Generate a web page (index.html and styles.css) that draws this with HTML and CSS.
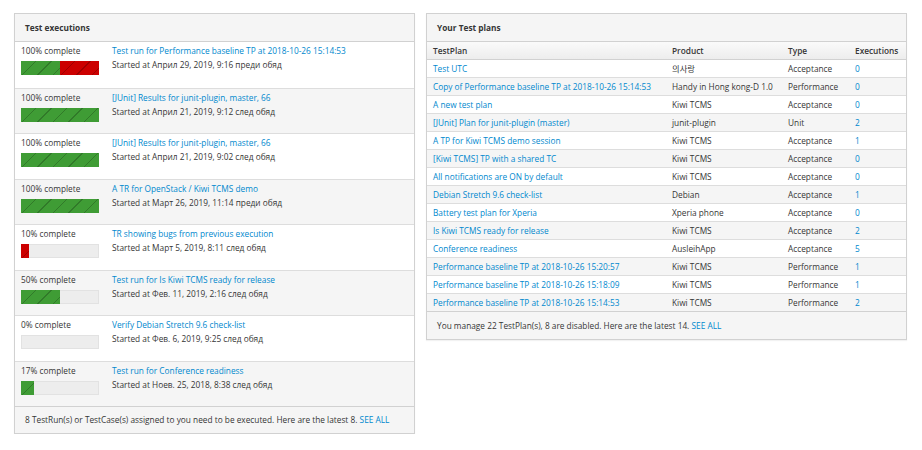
FILE: index.html
```html
<!DOCTYPE html>
<html>
<head>
<meta charset="utf-8">
<link rel="stylesheet" href="styles.css">
</head>
<body>
<div class="page">
  <div class="panel">
    <div class="panel-heading">Test executions</div>
    <div class="list">
      <div class="item">
        <div class="prog-col">
          <div class="pct">100% complete</div>
          <div class="bar"><div class="fill green" style="width:50%"></div><div class="fill red" style="width:50%"></div></div>
        </div>
        <div class="info-col">
          <a class="link">Test run for Performance baseline TP at 2018-10-26 15:14:53</a>
          <div class="started">Started at Април 29, 2019, 9:16 преди обяд</div>
        </div>
      </div>
      <div class="item">
        <div class="prog-col">
          <div class="pct">100% complete</div>
          <div class="bar"><div class="fill green" style="width:100%"></div></div>
        </div>
        <div class="info-col">
          <a class="link">[JUnit] Results for junit-plugin, master, 66</a>
          <div class="started">Started at Април 21, 2019, 9:12 след обяд</div>
        </div>
      </div>
      <div class="item">
        <div class="prog-col">
          <div class="pct">100% complete</div>
          <div class="bar"><div class="fill green" style="width:100%"></div></div>
        </div>
        <div class="info-col">
          <a class="link">[JUnit] Results for junit-plugin, master, 66</a>
          <div class="started">Started at Април 21, 2019, 9:02 след обяд</div>
        </div>
      </div>
      <div class="item">
        <div class="prog-col">
          <div class="pct">100% complete</div>
          <div class="bar"><div class="fill green" style="width:100%"></div></div>
        </div>
        <div class="info-col">
          <a class="link">A TR for OpenStack / Kiwi TCMS demo</a>
          <div class="started">Started at Март 26, 2019, 11:14 преди обяд</div>
        </div>
      </div>
      <div class="item">
        <div class="prog-col">
          <div class="pct">10% complete</div>
          <div class="bar"><div class="fill red" style="width:10%"></div></div>
        </div>
        <div class="info-col">
          <a class="link">TR showing bugs from previous execution</a>
          <div class="started">Started at Март 5, 2019, 8:11 след обяд</div>
        </div>
      </div>
      <div class="item">
        <div class="prog-col">
          <div class="pct">50% complete</div>
          <div class="bar"><div class="fill green" style="width:50%"></div></div>
        </div>
        <div class="info-col">
          <a class="link">Test run for Is Kiwi TCMS ready for release</a>
          <div class="started">Started at Фев. 11, 2019, 2:16 след обяд</div>
        </div>
      </div>
      <div class="item">
        <div class="prog-col">
          <div class="pct">0% complete</div>
          <div class="bar"></div>
        </div>
        <div class="info-col">
          <a class="link">Verify Debian Stretch 9.6 check-list</a>
          <div class="started">Started at Фев. 6, 2019, 9:25 след обяд</div>
        </div>
      </div>
      <div class="item">
        <div class="prog-col">
          <div class="pct">17% complete</div>
          <div class="bar"><div class="fill green" style="width:17%"></div></div>
        </div>
        <div class="info-col">
          <a class="link">Test run for Conference readiness</a>
          <div class="started">Started at Ноев. 25, 2018, 8:38 след обяд</div>
        </div>
      </div>
    </div>
    <div class="panel-footer">8 TestRun(s) or TestCase(s) assigned to you need to be executed. Here are the latest 8. <a class="link">SEE ALL</a></div>
  </div>

  <div class="panel">
    <div class="panel-heading">Your Test plans</div>
    <table class="plans">
      <thead>
        <tr><th class="c1">TestPlan</th><th class="c2">Product</th><th class="c3">Type</th><th class="c4">Executions</th></tr>
      </thead>
      <tbody>
        <tr><td><a class="link">Test UTC</a></td><td>의사랑</td><td>Acceptance</td><td><a class="link">0</a></td></tr>
        <tr><td><a class="link">Copy of Performance baseline TP at 2018-10-26 15:14:53</a></td><td>Handy in Hong kong-D 1.0</td><td>Performance</td><td><a class="link">0</a></td></tr>
        <tr><td><a class="link">A new test plan</a></td><td>Kiwi TCMS</td><td>Acceptance</td><td><a class="link">0</a></td></tr>
        <tr><td><a class="link">[JUnit] Plan for junit-plugin (master)</a></td><td>junit-plugin</td><td>Unit</td><td><a class="link">2</a></td></tr>
        <tr><td><a class="link">A TP for Kiwi TCMS demo session</a></td><td>Kiwi TCMS</td><td>Acceptance</td><td><a class="link">1</a></td></tr>
        <tr><td><a class="link">[Kiwi TCMS] TP with a shared TC</a></td><td>Kiwi TCMS</td><td>Acceptance</td><td><a class="link">0</a></td></tr>
        <tr><td><a class="link">All notifications are ON by default</a></td><td>Kiwi TCMS</td><td>Acceptance</td><td><a class="link">0</a></td></tr>
        <tr><td><a class="link">Debian Stretch 9.6 check-list</a></td><td>Debian</td><td>Acceptance</td><td><a class="link">1</a></td></tr>
        <tr><td><a class="link">Battery test plan for Xperia</a></td><td>Xperia phone</td><td>Acceptance</td><td><a class="link">0</a></td></tr>
        <tr><td><a class="link">Is Kiwi TCMS ready for release</a></td><td>Kiwi TCMS</td><td>Acceptance</td><td><a class="link">2</a></td></tr>
        <tr><td><a class="link">Conference readiness</a></td><td>AusleihApp</td><td>Acceptance</td><td><a class="link">5</a></td></tr>
        <tr><td><a class="link">Performance baseline TP at 2018-10-26 15:20:57</a></td><td>Kiwi TCMS</td><td>Performance</td><td><a class="link">1</a></td></tr>
        <tr><td><a class="link">Performance baseline TP at 2018-10-26 15:18:09</a></td><td>Kiwi TCMS</td><td>Performance</td><td><a class="link">1</a></td></tr>
        <tr><td><a class="link">Performance baseline TP at 2018-10-26 15:14:53</a></td><td>Kiwi TCMS</td><td>Performance</td><td><a class="link">2</a></td></tr>
      </tbody>
    </table>
    <div class="panel-footer">You manage 22 TestPlan(s), 8 are disabled. Here are the latest 14. <a class="link">SEE ALL</a></div>
  </div>
</div>
</body>
</html>
```

FILE: styles.css
```css
html, body {
  margin: 0;
  padding: 0;
  background: #ffffff;
}
body {
  font-family: "Open Sans", "Noto Sans CJK KR", sans-serif;
  font-size: 8.3px;
  color: #363636;
  line-height: 1.66;
}
.page {
  display: grid;
  grid-template-columns: 401fr 481fr;
  column-gap: 11px;
  align-items: start;
  padding: 13px 15px 0 14px;
}
.panel {
  border: 1px solid #d1d1d1;
  background: #fff;
  box-shadow: 0 1px 1px rgba(3,3,3,0.05);
}
.panel-heading {
  background: #f5f5f5;
  border-bottom: 1px solid #d1d1d1;
  height: 28px;
  box-sizing: border-box;
  padding: 0 10px;
  display: flex;
  align-items: center;
  font-weight: 700;
  font-size: 8.3px;
}
.item {
  display: flex;
  height: 45.5px;
  box-sizing: border-box;
  padding: 3px 6px 0 6px;
  border-top: 1px solid #ddd;
}
.item:first-child { border-top: 0; }
.item:nth-child(even) { background: #f5f5f5; }
.prog-col {
  width: 78px;
  margin-right: 13px;
  flex: none;
}
.pct { line-height: 12px; }
.bar {
  margin-top: 4px;
  height: 14px;
  background: #ededed;
  box-shadow: inset 0 0 0 1px #e2e2e2;
  display: flex;
  overflow: hidden;
}
.fill {
  height: 100%;
  background-image: repeating-linear-gradient(135deg, transparent 0 10px, rgba(0,0,0,0.22) 10px 11px);
}
.fill.green { background-color: #3f9c35; }
.fill.red { background-color: #cc0000; }
.link {
  color: #0088ce;
  text-decoration: none;
  display: block;
  line-height: 12px;
}
.panel-footer .link, td .link { display: inline; line-height: inherit; }
.started {
  line-height: 12px;
  margin-top: 2px;
}
.panel-footer {
  background: #f5f5f5;
  border-top: 1px solid #d1d1d1;
  height: 27px;
  box-sizing: border-box;
  padding: 0 10px;
  display: flex;
  align-items: center;
  white-space: pre;
}
.plans + .panel-footer { height: 28px; }
.plans {
  width: 100%;
  border-collapse: collapse;
}
.plans th {
  text-align: left;
  font-weight: 600;
  height: 17px;
  padding: 0 6px;
  background: linear-gradient(#fafafa, #ededed);
  border-bottom: 1px solid #d1d1d1;
}
.plans td {
  height: 17px;
  padding: 0 6px;
  border-top: 1px solid #ddd;
  white-space: nowrap;
}
.plans tbody tr:nth-child(even) td { background: #f5f5f5; }
.plans tbody tr:first-child td { border-top: 0; }
.c1 { width: 227px; }
.c2 { width: 104px; }
.c3 { width: 55px; }
```
